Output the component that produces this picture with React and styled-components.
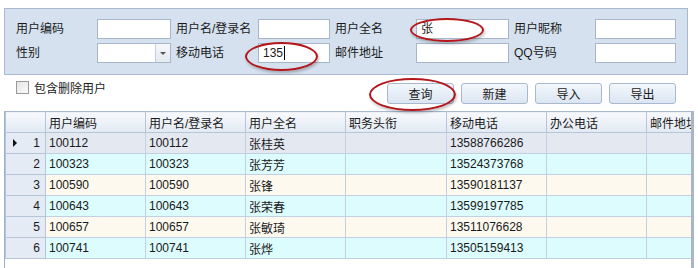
import styled, { createGlobalStyle } from 'styled-components';

const GlobalStyle = createGlobalStyle`
  body {
    margin: 0;
    background: #ffffff;
    font-family: "Liberation Sans", "Noto Sans CJK SC", sans-serif;
    font-size: 12px;
    color: #1a1a1a;
  }
`;

const Screen = styled.div`
  position: relative;
  width: 698px;
  height: 268px;
  overflow: hidden;
  background: #ffffff;
  padding: 8px 0 0 4px;
  box-sizing: border-box;
`;

const FilterPanel = styled.div`
  width: 684px;
  box-sizing: border-box;
  background: #d5e1ef;
  border: 1px solid #a9b9cf;
  padding: 10px 11px 11px 7px;
  display: grid;
  grid-template-columns: 85px 74px 87px 72px 86px 93px 86px 81px;
  grid-auto-rows: 20px;
  row-gap: 4px;
  align-items: center;
`;

const Label = styled.span`
  padding-left: ${(p) => (p.$first ? '4px' : '5px')};
  white-space: nowrap;
  line-height: 20px;
`;

const TextBox = styled.div`
  height: 20px;
  box-sizing: border-box;
  background: #ffffff;
  border: 1px solid #a7b6cb;
  padding: 0 0 0 4px;
  line-height: 18px;
  display: flex;
  align-items: center;
`;

const Caret = styled.span`
  display: inline-block;
  width: 1px;
  height: 14px;
  background: #000;
  margin-left: 1px;
`;

const Combo = styled.div`
  height: 20px;
  box-sizing: border-box;
  background: #ffffff;
  border: 1px solid #a7b6cb;
  display: flex;
  justify-content: flex-end;
`;

const DropButton = styled.div`
  width: 14px;
  border-left: 1px solid #c5d0de;
  background: linear-gradient(#f6f8fb, #e4e9f0);
  display: flex;
  align-items: center;
  justify-content: center;

  &::after {
    content: '';
    border-left: 3px solid transparent;
    border-right: 3px solid transparent;
    border-top: 3px solid #555;
  }
`;

const ToolRow = styled.div`
  width: 672px;
  height: 36px;
  display: flex;
  align-items: center;
  justify-content: space-between;
  padding-left: 12px;
  box-sizing: border-box;
`;

const CheckLabel = styled.label`
  display: flex;
  align-items: center;
  gap: 5px;
  margin-top: -11px;
`;

const CheckBox = styled.span`
  width: 11px;
  height: 11px;
  border: 1px solid #9a9a9a;
  background: linear-gradient(135deg, #e6e6e6, #fafafa);
`;

const Buttons = styled.div`
  display: flex;
  gap: 7px;
  margin-top: 0;
`;

const Button = styled.button`
  width: 67px;
  height: 21px;
  font: inherit;
  color: #1a1a1a;
  border: 1px solid #a8b9cf;
  border-radius: 3px;
  background: linear-gradient(#f3f7fc, #dbe5f1);
  padding: 0;
`;

const GridBox = styled.div`
  width: 690px;
  height: 160px;
  overflow: hidden;
  border-left: 1px solid #9fb0c6;
  border-right: 3px solid #aab6c4;
  box-sizing: border-box;
`;

const Table = styled.table`
  border-collapse: collapse;
  table-layout: fixed;
  width: 800px;
`;

const Th = styled.th`
  height: 20px;
  padding: 0 3px;
  text-align: left;
  font-weight: normal;
  white-space: nowrap;
  overflow: hidden;
  background: linear-gradient(#f7f9fc, #e2e9f3);
  border: 1px solid #b7c5d8;
  border-top: 1px solid #a9b9cf;
`;

const rowColors = {
  selected: '#e3e8f1',
  even: '#ddfcfd',
  odd: '#fdf9ef',
};

const Tr = styled.tr`
  background: ${(p) => rowColors[p.$tone]};
`;

const Td = styled.td`
  height: 20px;
  padding: 0 3px;
  border: 1px solid #c3d0e3;
  white-space: nowrap;
  overflow: hidden;
`;

const IndexCell = styled.td`
  height: 20px;
  padding: 0 5px 0 8px;
  border: 1px solid #b7c5d8;
  background: #e4ebf5;
  text-align: right;
  position: relative;
`;

const Pointer = styled.span`
  position: absolute;
  left: 7px;
  top: 6px;
  border-top: 4px solid transparent;
  border-bottom: 4px solid transparent;
  border-left: 4px solid #111;
`;

const Mark = styled.div`
  position: absolute;
  border: 2px solid #b3161b;
  border-radius: 50%;
  box-shadow: 1px 2px 3px rgba(0, 0, 0, 0.25);
  pointer-events: none;
`;

const columns = [
  { title: '', width: 40 },
  { title: '用户编码', width: 100 },
  { title: '用户名/登录名', width: 100 },
  { title: '用户全名', width: 100 },
  { title: '职务头衔', width: 101 },
  { title: '移动电话', width: 100 },
  { title: '办公电话', width: 100 },
  { title: '邮件地址', width: 159 },
];

const users = [
  { code: '100112', name: '张桂英', phone: '13588766286' },
  { code: '100323', name: '张芳芳', phone: '13524373768' },
  { code: '100590', name: '张锋', phone: '13590181137' },
  { code: '100643', name: '张荣春', phone: '13599197785' },
  { code: '100657', name: '张敏琦', phone: '13511076628' },
  { code: '100741', name: '张烨', phone: '13505159413' },
];

function App() {
  return (
    <Screen>
      <GlobalStyle />
      <FilterPanel>
        <Label $first>用户编码</Label>
        <TextBox />
        <Label>用户名/登录名</Label>
        <TextBox />
        <Label>用户全名</Label>
        <TextBox>张</TextBox>
        <Label>用户昵称</Label>
        <TextBox />

        <Label $first>性别</Label>
        <Combo>
          <DropButton />
        </Combo>
        <Label>移动电话</Label>
        <TextBox>
          135
          <Caret />
        </TextBox>
        <Label>邮件地址</Label>
        <TextBox />
        <Label>QQ号码</Label>
        <TextBox />
      </FilterPanel>

      <ToolRow>
        <CheckLabel>
          <CheckBox />
          包含删除用户
        </CheckLabel>
        <Buttons>
          <Button>查询</Button>
          <Button>新建</Button>
          <Button>导入</Button>
          <Button>导出</Button>
        </Buttons>
      </ToolRow>

      <GridBox>
        <Table>
          <colgroup>
            {columns.map((c, i) => (
              <col key={i} style={{ width: c.width }} />
            ))}
          </colgroup>
          <thead>
            <tr>
              {columns.map((c, i) => (
                <Th key={i}>{c.title}</Th>
              ))}
            </tr>
          </thead>
          <tbody>
            {users.map((u, i) => (
              <Tr key={u.code} $tone={i === 0 ? 'selected' : i % 2 ? 'even' : 'odd'}>
                <IndexCell>
                  {i === 0 && <Pointer />}
                  {i + 1}
                </IndexCell>
                <Td>{u.code}</Td>
                <Td>{u.code}</Td>
                <Td>{u.name}</Td>
                <Td />
                <Td>{u.phone}</Td>
                <Td />
                <Td />
              </Tr>
            ))}
          </tbody>
        </Table>
      </GridBox>

      <Mark style={{ left: 410, top: 18, width: 70, height: 20 }} />
      <Mark style={{ left: 245, top: 42, width: 69, height: 25 }} />
      <Mark style={{ left: 369, top: 78, width: 83, height: 29 }} />
    </Screen>
  );
}

export default App;
